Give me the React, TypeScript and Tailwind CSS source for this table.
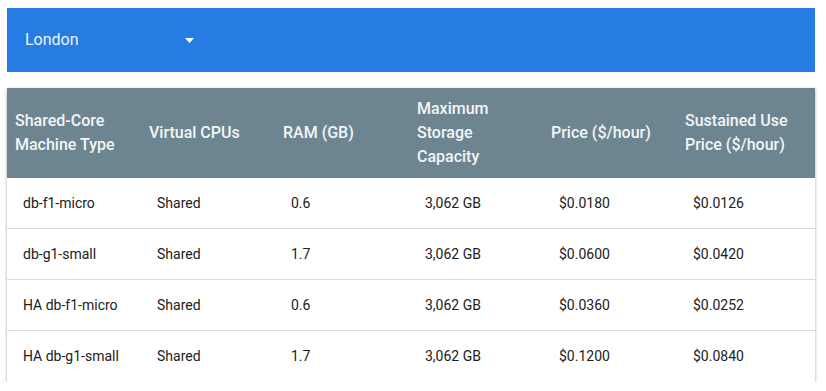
import { useState } from "react"

const columns = [
    "Shared-Core Machine Type",
    "Virtual CPUs",
    "RAM (GB)",
    "Maximum Storage Capacity",
    "Price ($/hour)",
    "Sustained Use Price ($/hour)",
]

const rows = [
    ["db-f1-micro", "Shared", "0.6", "3,062 GB", "$0.0180", "$0.0126"],
    ["db-g1-small", "Shared", "1.7", "3,062 GB", "$0.0600", "$0.0420"],
    ["HA db-f1-micro", "Shared", "0.6", "3,062 GB", "$0.0360", "$0.0252"],
    ["HA db-g1-small", "Shared", "1.7", "3,062 GB", "$0.1200", "$0.0840"],
]

function RegionSelect() {
    const [region] = useState("London")
    return (
        <div className="flex items-center h-16 bg-[#267ce3] pl-[18px]">
            <div className="flex items-center w-[169px] justify-between">
                <span className="text-[16px] text-[#eef4fd]">{region}</span>
                <svg width="9" height="5" viewBox="0 0 9 5">
                    <path d="M0 0 L9 0 L4.5 5 Z" fill="#ffffff" />
                </svg>
            </div>
        </div>
    )
}

export default function App() {
    return (
        <div className="pt-2 pl-[7px] w-[815px] bg-white" style={{ fontFamily: "Roboto, 'Liberation Sans', sans-serif" }}>
            <RegionSelect />

            <div className="mt-4 bg-white shadow-[0_1px_3px_rgba(0,0,0,0.35)]">
                <div className="grid grid-cols-[134px_134px_134px_134px_134px_1fr] h-[90px] bg-[#6d8591]">
                    {columns.map(c => (
                        <div key={c} className="flex items-center px-2 text-[16px] leading-6 font-medium text-[#f3f5f6]">
                            <span className="pr-4">{c}</span>
                        </div>
                    ))}
                </div>
                {rows.map((r, i) => (
                    <div
                        key={r[0]}
                        className={"grid grid-cols-[134px_134px_134px_134px_134px_1fr] h-[51px] " + (i < rows.length - 1 ? "border-b border-[#d6dbe0]" : "")}>
                        {r.map((v, j) => (
                            <div key={j} className="flex items-center pl-4 text-[14px] text-[#212121]">
                                {v}
                            </div>
                        ))}
                    </div>
                ))}
            </div>
        </div>
    )
}
